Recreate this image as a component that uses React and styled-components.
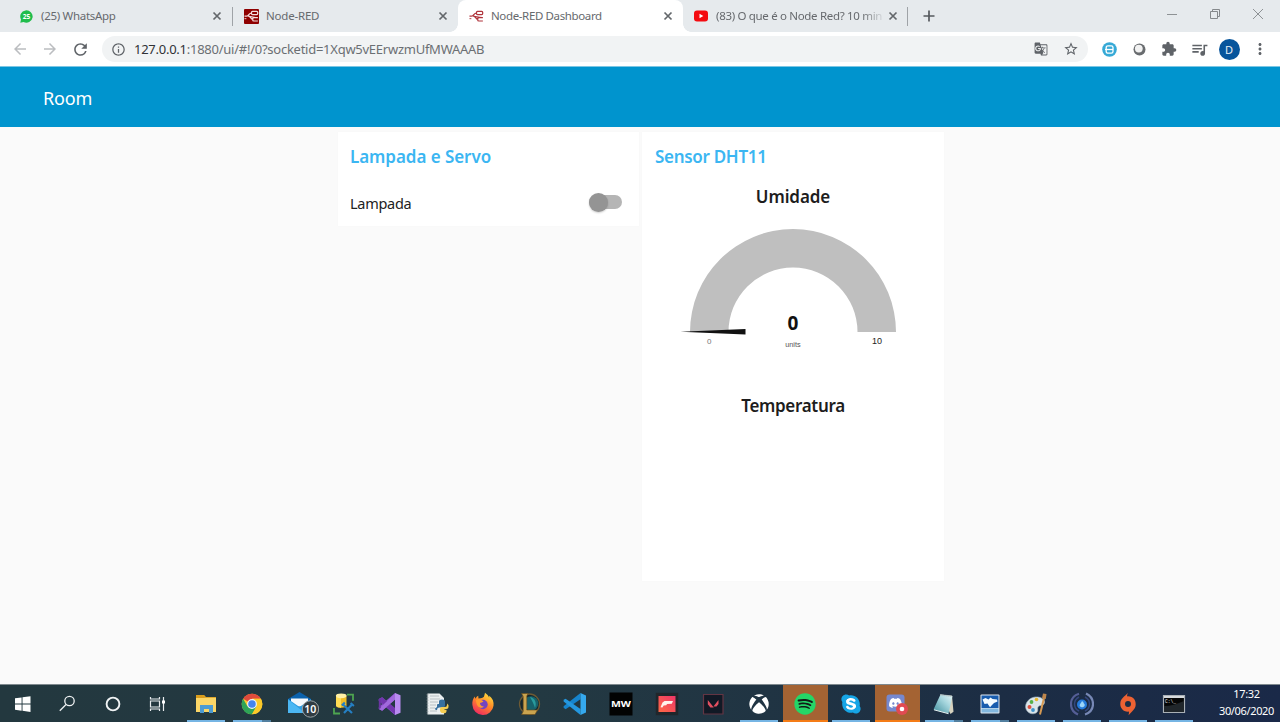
import React from "react";
import styled, { createGlobalStyle, css } from "styled-components";
import {
  MdArrowBack,
  MdArrowForward,
  MdRefresh,
  MdInfoOutline,
  MdGTranslate,
  MdStarBorder,
  MdExtension,
  MdQueueMusic,
  MdMoreVert,
} from "react-icons/md";
import { FaXbox, FaSpotify, FaSkype, FaDiscord } from "react-icons/fa";

const Global = createGlobalStyle`
  * { box-sizing: border-box; }
  html, body { margin: 0; padding: 0; overflow: hidden; }
  svg { display: block; flex: none; }
`;

const Screen = styled.div`
  width: 1280px;
  height: 722px;
  display: flex;
  flex-direction: column;
  overflow: hidden;
  background: #fafafa;
  font-family: "Noto Sans", "Open Sans", sans-serif;
`;

/* ---------- browser chrome ---------- */
const TabStrip = styled.div`
  height: 32px;
  display: flex;
  background: #e6eaed;
  flex: none;
`;
const TabItem = styled.div`
  position: relative;
  width: ${(p) => p.$w}px;
  height: 32px;
  display: flex;
  align-items: center;
  padding: 0 9px 0 ${(p) => p.$pad}px;
  color: #66696d;
  font-size: 11.5px;
  ${(p) =>
    p.$active &&
    css`
      background: #fff;
      border-radius: 8px 8px 0 0;
      &::before,
      &::after {
        content: "";
        position: absolute;
        bottom: 0;
        width: 8px;
        height: 8px;
      }
      &::before {
        left: -8px;
        background: radial-gradient(circle at 0 0, transparent 7.5px, #fff 8px);
      }
      &::after {
        right: -8px;
        background: radial-gradient(circle at 100% 0, transparent 7.5px, #fff 8px);
      }
    `}
`;
const TabLabel = styled.span`
  margin-left: ${(p) => p.$gap}px;
  letter-spacing: ${(p) => p.$ls}px;
  white-space: nowrap;
  flex: 1;
  line-height: 18px;
  ${(p) =>
    p.$fade &&
    css`
      mask-image: linear-gradient(90deg, #000 calc(100% - 20px), rgba(0, 0, 0, 0.15));
    `}
`;
const CloseMark = () => (
  <svg width="12" height="12" viewBox="0 0 12 12">
    <path d="M2.5 2.5l7 7M9.5 2.5l-7 7" stroke="#63676b" strokeWidth="1.7" />
  </svg>
);
const TabDivider = styled.div`
  width: 1px;
  height: 19px;
  margin-top: 7px;
  background: #9fa3a7;
`;
const NewTab = styled.div`
  width: 42px;
  display: flex;
  align-items: center;
  justify-content: center;
`;
const WindowButtons = styled.div`
  margin-left: auto;
  display: flex;
  width: 130px;
  padding-right: 1px;
  height: 27px;
  svg {
    margin: auto;
  }
`;
const Toolbar = styled.div`
  height: 34px;
  flex: none;
  display: flex;
  align-items: center;
  background: #fff;
  padding: 0 0 0 5px;
  color: #5f6368;
`;
const NavButton = styled.div`
  width: 30px;
  display: flex;
  justify-content: center;
  color: ${(p) => (p.$dim ? "#bbbdc0" : "#5f6368")};
`;
const AddressBar = styled.div`
  margin-left: 7px;
  width: 986px;
  height: 26px;
  border-radius: 13px;
  background: #f1f3f4;
  display: flex;
  align-items: center;
  padding: 0 9px;
`;
const Url = styled.span`
  margin-left: 8px;
  flex: 1;
  font-size: 13px;
  line-height: 20px;
  letter-spacing: -0.255px;
  color: #6b6f73;
  b {
    font-weight: 400;
    color: #303236;
  }
`;
const Spacer = styled.div`
  width: ${(p) => p.$w}px;
  flex: none;
`;
const Extensions = styled.div`
  display: flex;
  margin-left: 6px;
`;
const ToolSlot = styled.div`
  width: ${(p) => p.$w || 30}px;
  height: 26px;
  display: flex;
  align-items: center;
  justify-content: center;
`;
const Avatar = styled.div`
  width: 21px;
  height: 21px;
  border-radius: 50%;
  background: #07559c;
  color: #e6eef6;
  font-size: 11px;
  line-height: 21px;
  text-align: center;
`;

/* ---------- dashboard ---------- */
const Header = styled.header`
  height: 61px;
  flex: none;
  background: #0094ce;
  border-top: 1px solid #7cc6e4;
  padding: 2px 0 0 43px;
  display: flex;
  align-items: center;
  color: #fff;
  font-size: 18px;
  letter-spacing: -0.15px;
`;
const Main = styled.main`
  flex: 1;
  display: flex;
  align-items: flex-start;
  gap: 3px;
  padding: 5px 0 0 338px;
`;
const Card = styled.section`
  width: ${(p) => p.$w}px;
  height: ${(p) => p.$h}px;
  background: #fff;
  box-shadow: 0 0 1px #f0f0f0;
  padding: 13px ${(p) => p.$px}px 0;
`;
const CardTitle = styled.h2`
  margin: 0;
  font-size: 17px;
  line-height: 24px;
  font-weight: 600;
  letter-spacing: ${(p) => p.$ls}px;
  color: #3bb6f2;
`;
const SwitchRow = styled.div`
  display: flex;
  align-items: center;
  justify-content: space-between;
  margin-top: 22px;
  padding-right: 5px;
  height: 24px;
  font-size: 14.5px;
  letter-spacing: -0.28px;
  color: #222;
`;
const Track = styled.div`
  width: 33px;
  height: 14px;
  border-radius: 7px;
  background: #b5b5b5;
  display: flex;
  align-items: center;
  margin-bottom: 2px;
`;
const Thumb = styled.div`
  width: 19px;
  height: 19px;
  flex: none;
  border-radius: 50%;
  background: #949494;
  box-shadow: 0 1px 2px rgba(0, 0, 0, 0.2);
`;
const GaugeTitle = styled.h3`
  margin: ${(p) => p.$mt}px 0 0;
  font-size: 17px;
  line-height: 24px;
  font-weight: 600;
  letter-spacing: ${(p) => p.$ls}px;
  text-align: center;
  color: #1d1d1d;
`;
const GaugeBox = styled.div`
  height: 140px;
  margin-top: 12px;
  display: flex;
  justify-content: center;
`;

/* ---------- taskbar ---------- */
const Taskbar = styled.footer`
  height: 38px;
  flex: none;
  display: flex;
  border-top: 1px solid #7f898e;
  background: linear-gradient(90deg, #23383f 0%, #233942 42%, #203443 60%, #1c2d44 78%, #1a2948 100%);
`;
const SystemCell = styled.div`
  width: 45px;
  height: 37px;
  display: flex;
  align-items: center;
  justify-content: center;
`;
const AppCell = styled.div`
  width: 46.1px;
  height: 37px;
  position: relative;
  display: flex;
  align-items: center;
  justify-content: center;
  ${(p) =>
    p.$alert &&
    css`
      background: linear-gradient(#a46333, #a46333) center / 45px 100% no-repeat;
    `}
  &::after {
    content: "";
    position: absolute;
    bottom: 0;
    left: ${(p) => (p.$alert ? 0.5 : 4)}px;
    width: ${(p) => (p.$alert ? 45 : 38)}px;
    height: 2px;
    background: ${(p) =>
      p.$alert
        ? "#f57c16"
        : p.$multi
        ? "linear-gradient(90deg,#76b5e4 29px,#527f9f 29px)"
        : p.$open
        ? "#76b5e4"
        : "transparent"};
  }
`;
const Clock = styled.div`
  margin-left: auto;
  width: 66px;
  padding: 0 1px 0 0;
  text-align: center;
  color: #fff;
  font-size: 11px;
  line-height: 17px;
  letter-spacing: -0.35px;
  white-space: nowrap;
`;
const SkypeDisc = styled.div`
  display: flex;
  background: radial-gradient(circle, #fff 6px, transparent 7px);
`;
const SpotifyDisc = styled.div`
  display: flex;
  border-radius: 50%;
  background: radial-gradient(circle, #101c17 9px, transparent 10px);
`;

const FlowMark = ({ size, color, bg }) => (
  <svg width={size} height={size} viewBox="0 0 16 16">
    {bg && <rect width="16" height="16" rx="1" fill={bg} />}
    <g fill="none" stroke={color} strokeWidth="1.3">
      <rect x="8" y="2.600" width="6.600" height="3.300" rx="1" />
      <path d="M8 4.300C5 4.300 5.300 7.500 2.600 7.500H.5M3.500 7.300C7.500 6.600 6.500 11 9.500 11.200M14.800 9.300H10.500q-1.200 0-1.200 1v1.500q0 1 1.200 1h4.300M6 7.800c2 .2 4 1.400 8 1.400" />
    </g>
    <path d="M.5 10.300h2" stroke={color} />
  </svg>
);

const Svg = ({ s = 24, children }) => (
  <svg width={s} height={s} viewBox="0 0 24 24">
    {children}
  </svg>
);

const Explorer = () => (
  <Svg>
    <path d="M2 3h8l2 2h10v15H2z" fill="#e1a82c" />
    <path d="M2 6h20v14H2z" fill="#fbd667" />
    <path d="M2 3h8l1 2-1 1H2z" fill="#d99d1c" />
    <path d="M6 21v-8h13v8h-4v-4h-5v4z" fill="#4c9bd3" />
  </Svg>
);
const Chrome = () => (
  <Svg>
    <circle cx="12" cy="12" r="10.3" fill="#fbc929" />
    <path d="M12 12L3.1 6.8A10.3 10.3 0 0 1 20.9 6.8H12z" fill="#df4a3c" />
    <path d="M3.1 6.8A10.3 10.3 0 0 0 12 22.3l4.400-7.700L12 12 7.500 14.500z" fill="#2ea457" />
    <path d="M12 6.800h8.900A10.300 10.300 0 0 1 12 22.300l4.500-7.700z" fill="#fbc929" />
    <circle cx="12" cy="12" r="4.900" fill="#eef4fb" />
    <circle cx="12" cy="12" r="3.800" fill="#4484ee" />
  </Svg>
);
const MailSlot = styled.div`
  margin-left: 6px;
`;
const Mail = () => (
  <MailSlot>
    <svg width="36" height="28" viewBox="0 0 36 28">
      <path d="M5 9L16.500 2 28 9v14H5z" fill="#0b62ad" />
      <path d="M8 8.500h17v8H8z" fill="#f5f8fb" />
      <path d="M5 9l11.500 8L28 9v14H5z" fill="#2b9de2" />
      <path d="M5 9.500L22 23H5z" fill="#4cb7f3" />
      <circle cx="27.500" cy="19" r="8.200" fill="#303c42" stroke="#9ba3a6" />
      <text x="27.300" y="23" textAnchor="middle" fontSize="10.500" fontWeight="600" fontFamily="Noto Sans, sans-serif" fill="#fff">10</text>
    </svg>
  </MailSlot>
);
const Database = () => (
  <Svg>
    <path d="M15 2.700h6v6M2 16v5.500h6" stroke="#4ea550" strokeWidth="1.800" fill="none" />
    <path d="M4 3.500v10c0 3 10.500 3 10.500 0v-10z" fill="#f0bd27" />
    <path d="M4 5v8.500c0 1.500 3 2.200 5 2.200V5z" fill="#ffdc54" />
    <ellipse cx="9.200" cy="3.800" rx="5.300" ry="2.400" fill="#fff0a5" />
    <path d="M11 12.500l9 8.500M20.500 12L12 21" stroke="#257fc3" strokeWidth="2.200" />
    <path d="M9.800 13.500l3-3M18.600 11l3.300 3" stroke="#257fc3" strokeWidth="2" />
  </Svg>
);
const VisualStudio = () => (
  <Svg>
    <path d="M17 1v6.200L4.200 18.800.8 17V7l3.400-1.800L17 16.800V23L.8 9v6z" fill="#8d50cf" />
    <path d="M.8 7l3.400-1.800L18 16.800V23L.8 9z" fill="#7236ad" />
    <path d="M17.500 1v6.200L4.200 18.800.8 17z" fill="#a169dc" />
    <path d="M.8 7v10l2-1V8z" fill="#6b35a2" />
    <path d="M17 1l5.500 2.300v17.400L17 23z" fill="#b98bf0" />
  </Svg>
);
const PythonFile = () => (
  <Svg>
    <path d="M2.500 1.500h12L19 6v16.500H2.500z" fill="#ebeff0" />
    <path d="M5 4h9M5 7h10M5 10h8M5 13h6M5 16h5M5 19h7" stroke="#b8c0c3" />
    <path d="M2.500 2v20" stroke="#8c9699" strokeWidth="1.500" strokeDasharray="1.400 1.400" />
    <path d="M12 15v-2q0-1 1-1h1V9.500q0-2 3-2t3 2v4q0 2-2 2h-4q-2 0-2 2.500h-.500q-1.500 0-1.500-1.500z" fill="#36709f" />
    <path d="M22.500 11.500q1.500 1.500 1 3.500 0 2-2 2h-2v.700h2V19q0 2.300-3 2.300t-3.500-2.300v-2q0-2 2-2h3q2 0 2-2z" fill="#f5ce52" />
  </Svg>
);
const Firefox = () => (
  <Svg>
    <defs>
      <linearGradient id="ff" x1=".8" y1="0" x2=".25" y2="1">
        <stop offset="0" stopColor="#ffe642" />
        <stop offset=".45" stopColor="#ff8a26" />
        <stop offset="1" stopColor="#ef2465" />
      </linearGradient>
    </defs>
    <path d="M14 .8c2 1.500 3.600 3 4.100 5l.2-2c3.500 2.700 4.700 6 4.200 10A10.600 10.600 0 0 1 1.400 13C1 9.500 2 6.500 3.800 4.400l.6 2.400c.9-1.800 1.800-2.500 2.800-3.100l.3 2.700c3.300 0 4-.4 5.400-1.600.6-1.200.7-2.500 1.100-4z" fill="url(#ff)" />
    <circle cx="12" cy="12.500" r="4.700" fill="#7444bf" />
    <path d="M5 8c3-2 6 0 7.500 1.500-1 1-2.500 1-3.500 1.500 0 2 1.500 3.700 4 3.600-3 3-8 .4-8-6.600z" fill="#ff9a2d" />
  </Svg>
);
const League = () => (
  <Svg>
    <circle cx="12.500" cy="12" r="10" fill="#14262c" stroke="#6d5a34" strokeWidth="1.300" />
    <circle cx="14" cy="11.500" r="7.300" fill="#17616b" />
    <path d="M13 5c5 1 7 6 5 11-1-4-3-7-5-11z" fill="#299b9d" />
    <path d="M4.500 1.500h6.500L9.800 4v14h10.700L18 22.500H4.500l1.700-3V4.300z" fill="#caa44f" stroke="#664919" strokeWidth=".6" />
  </Svg>
);
const VsCode = () => (
  <Svg>
    <path d="M17.500 1v6.300L2.600 17.300.6 15.800v-1.600z" fill="#1684cd" />
    <path d="M17.500 23L.6 9.400V7.700L2.600 6.700 17.500 16.900z" fill="#2497df" />
    <path d="M17.500 1L23 3.500v17L17.500 23z" fill="#35a9ee" />
  </Svg>
);
const Warfare = () => (
  <Svg>
    <path d="M.5.500h23v23H.500z" fill="#020303" />
    <text x="12" y="15" textAnchor="middle" fontSize="8" fontWeight="700" textLength="20" lengthAdjust="spacingAndGlyphs" fontFamily="Noto Sans, sans-serif" fill="#fff">MW</text>
  </Svg>
);
const FGame = () => (
  <Svg>
    <defs>
      <linearGradient id="fg" x1="0" y1="1" x2="1" y2="0">
        <stop offset="0" stopColor="#ff6845" />
        <stop offset="1" stopColor="#ee3668" />
      </linearGradient>
    </defs>
    <path d="M.8.800h22.400v22.400H.8z" fill="#21262b" />
    <path d="M3.500 4h17v16h-17z" fill="url(#fg)" />
    <path d="M9.500 9H18l-1.200 2.700-4.700.3-.9 1.300-2.500.2-1.300 2-1.900-.2 2-4.800z" fill="#fff1eb" />
  </Svg>
);
const Valorant = () => (
  <Svg>
    <path d="M2.500 2.500h19.500v19.500H2.500z" fill="#111925" stroke="#633543" strokeWidth="1.200" />
    <path d="M6.800 8l6 7.500H9.400L6.800 12.200zM17.500 8v4l-2 2.600h-3.100z" fill="#e35061" />
  </Svg>
);
const DiscordMark = () => (
  <Svg>
    <rect x="1.500" y="2.500" width="18" height="17" rx="3" fill="#7688ce" />
    <FaDiscord x="3.500" y="4" width="14" height="14" size={14} color="#fff" />
    <circle cx="17" cy="17" r="6" fill="#e14a52" />
    <circle cx="17" cy="17" r="2.300" fill="#fff" />
  </Svg>
);
const Notepad = () => (
  <Svg>
    <defs>
      <linearGradient id="np" x1="0" y1="1" x2="1" y2="0">
        <stop offset="0" stopColor="#3c8c9b" />
        <stop offset=".6" stopColor="#a5d5dd" />
        <stop offset="1" stopColor="#e8f6f7" />
      </linearGradient>
    </defs>
    <path d="M8 2.500l12 1.200 1.500 16-3 2.200z" fill="#d6d2bf" />
    <path d="M8.500 2.500L20.500 4 16.500 21.500l-15-4z" fill="url(#np)" />
    <path d="M8.500 2.800L20 4.200" stroke="#a9b3b5" strokeWidth="1.500" strokeDasharray="1 1" />
    <path d="M2 17.800l14.500 3.900" stroke="#eaf6f6" />
  </Svg>
);
const Photo = () => (
  <Svg>
    <rect x="2.500" y="2.500" width="19" height="19" rx="1" fill="#dfe8ef" />
    <path d="M3.500 3.500h17V16h-17z" fill="#185cae" />
    <path d="M4.500 7.500l3-1.500 3 1.500 2-2 2 1.500 4.500.5.500 2-3.500 1.500-2 2-2 2.200-1.500-2.200-1-1.500-3 .5z" fill="#f4fbff" />
    <path d="M3.500 16.500h17v4h-17z" fill="#83b8df" />
  </Svg>
);
const Paint = () => (
  <Svg>
    <path d="M2 17c-2-6 4-13 12-12 7 1 8 6 5 8-2 1-4 0-5 2-1 2 1 4-2 6-4 2-8.500 0-10-4z" fill="#dbe5ea" stroke="#a3b5bf" strokeWidth=".6" />
    <circle cx="5.500" cy="15" r="2" fill="#db5240" />
    <circle cx="7.500" cy="10" r="1.900" fill="#56af4a" />
    <circle cx="12.500" cy="7.500" r="1.800" fill="#e7b62f" />
    <circle cx="9" cy="18" r="1.900" fill="#4294cc" />
    <path d="M20 6l-4 16.500" stroke="#d59953" strokeWidth="2" />
    <path d="M18 6l1-4.500L22.500 2l-.7 5z" fill="#be864c" />
  </Svg>
);
const Orbit = () => (
  <Svg>
    <g fill="none" strokeWidth="2.200">
      <path d="M9 1.800C-1.500 5-1.500 18 8 22.500" stroke="#555e96" />
      <path d="M15 22.500C25.500 19 25.500 6 16 1.500" stroke="#7788b5" />
      <path d="M9 5C3 8 3 16 9 19M15 5c6 3 6 11 0 14" stroke="#35477d" strokeWidth="1.500" />
    </g>
    <circle cx="12" cy="12.500" r="5" fill="#267bdc" />
    <path d="M12 9c1.700 1 1.500 2 2.500 3.300s-.8 3-2.500 3-3-1.500-2-3 1.500-2 2-3.300z" fill="#9bd5fa" />
  </Svg>
);
const Origin = () => (
  <Svg>
    <path d="M12 1c-.8 1.300-1 2.300-.8 3.400C17 4 20 8 19.700 12.700 19.500 17.500 15 20 12.500 23.300c.5-1.600.6-2.800.3-3.700C7 20 4 16 4.300 11.300 4.500 6.500 9 4 12 1z" fill="#ed6233" />
    <circle cx="12" cy="12" r="3" fill="#1c2d44" />
  </Svg>
);
const Terminal = () => (
  <Svg>
    <path d="M1.500 3.500h21v17h-21z" fill="#050607" stroke="#a9b0b6" strokeWidth="1.200" />
    <path d="M2 4h20v2H2z" fill="#d6dade" />
    <path d="M2 14c7 0 13-2 20-5v11H2z" fill="#20262b" />
    <text x="3" y="10.800" fontSize="4.600" fontFamily="Liberation Mono, monospace" fill="#e7eaec">C:\_</text>
  </Svg>
);

const apps = [
  { icon: <Explorer />, open: true },
  { icon: <Chrome />, multi: true },
  { icon: <Mail /> },
  { icon: <Database /> },
  { icon: <VisualStudio /> },
  { icon: <PythonFile /> },
  { icon: <Firefox /> },
  { icon: <League /> },
  { icon: <VsCode /> },
  { icon: <Warfare /> },
  { icon: <FGame /> },
  { icon: <Valorant /> },
  { icon: <FaXbox size={20} color="#fff" />, open: true },
  { icon: <SpotifyDisc><FaSpotify size={22} color="#25d667" /></SpotifyDisc>, alert: true },
  { icon: <SkypeDisc><FaSkype size={22} color="#16a5e6" /></SkypeDisc>, open: true },
  { icon: <DiscordMark />, alert: true },
  { icon: <Notepad />, multi: true },
  { icon: <Photo />, multi: true },
  { icon: <Paint />, open: true },
  { icon: <Orbit />, open: true },
  { icon: <Origin />, open: true },
  { icon: <Terminal />, open: true },
];

const Gauge = () => (
  <svg width="240" height="140" viewBox="673.500 221 240 140">
    <path d="M690.500 332a103 103 0 0 1 206 0h-38.500a64.500 64.500 0 0 0-129 0z" fill="#bfbfbf" />
    <path d="M681 331.700L746 329v5.500z" fill="#111" />
    <g fontFamily="Liberation Sans, Arial, sans-serif" textAnchor="middle">
      <text x="709.800" y="344" fontSize="8" fill="#777">0</text>
      <text x="877.500" y="344" fontSize="9" fill="#222">10</text>
      <text x="793.400" y="347" fontSize="7.300" fill="#555">units</text>
    </g>
    <text x="793.500" y="330" fontSize="19" fontWeight="700" textAnchor="middle" fontFamily="Noto Sans, sans-serif" fill="#111">0</text>
  </svg>
);

export default function App() {
  return (
    <Screen>
      <Global />
      <TabStrip>
        <TabItem $w={232} $pad={20}>
          <svg width="13" height="13" viewBox="0 0 13 13">
            <path d="M.3 12.700L1 9.500A6.200 6.200 0 1 1 3.500 12z" fill="#20bd4c" />
            <text x="6.600" y="9" textAnchor="middle" fontSize="6.600" fontWeight="700" fontFamily="Noto Sans, sans-serif" fill="#fff">25</text>
          </svg>
          <TabLabel $gap={8} $ls={-0.3}>(25) WhatsApp</TabLabel>
          <CloseMark />
        </TabItem>
        <TabDivider />
        <TabItem $w={225} $pad={11}>
          <FlowMark size={15} color="#f4dede" bg="#8f0000" />
          <TabLabel $gap={7} $ls={-0.2}>Node-RED</TabLabel>
          <CloseMark />
        </TabItem>
        <TabItem $w={225} $pad={11} $active>
          <FlowMark size={15} color="#b0343c" />
          <TabLabel $gap={7} $ls={-0.37}>Node-RED Dashboard</TabLabel>
          <CloseMark />
        </TabItem>
        <TabItem $w={224} $pad={11}>
          <svg width="14" height="12" viewBox="0 0 14 12">
            <rect y=".5" width="14" height="11" rx="3" fill="#f40b10" />
            <path d="M5.500 3.700v4.600L9.300 6z" fill="#fff" />
          </svg>
          <TabLabel $gap={8} $ls={-0.32} $fade>(83) O que é o Node Red? 10 min</TabLabel>
          <Spacer $w={5} />
          <CloseMark />
        </TabItem>
        <TabDivider />
        <NewTab>
          <svg width="12" height="12" viewBox="0 0 12 12">
            <path d="M6 .5v11M.5 6h11" stroke="#55595d" strokeWidth="1.700" />
          </svg>
        </NewTab>
        <WindowButtons>
          <svg width="12" height="12" viewBox="0 0 12 12"><path d="M1 6.500h10" stroke="#8e9295" /></svg>
          <svg width="12" height="12" viewBox="0 0 12 12" fill="none" stroke="#85898c">
            <path d="M1.500 3.500h7v7h-7zM3.500 3.500v-2h7v7h-2" />
          </svg>
          <svg width="12" height="12" viewBox="0 0 12 12"><path d="M1 1l10 10M11 1L1 11" stroke="#8e9295" /></svg>
        </WindowButtons>
      </TabStrip>

      <Toolbar>
        <NavButton $dim><MdArrowBack size={18} /></NavButton>
        <NavButton $dim><MdArrowForward size={18} /></NavButton>
        <NavButton><MdRefresh size={19} /></NavButton>
        <AddressBar>
          <MdInfoOutline size={15} />
          <Url><b>127.0.0.1</b>:1880/ui/#!/0?socketid=1Xqw5vEErwzmUfMWAAAB</Url>
          <MdGTranslate size={14} />
          <Spacer $w={15} />
          <MdStarBorder size={16} />
        </AddressBar>
        <Extensions>
          <ToolSlot>
            <svg width="15" height="15" viewBox="0 0 15 15">
              <circle cx="7.500" cy="7.500" r="7.300" fill="#36a9d6" />
              <rect x="4.200" y="3.800" width="6.800" height="7.400" rx="1.700" fill="none" stroke="#fff" strokeWidth="1.300" />
              <path d="M3 7.500h8" stroke="#fff" strokeWidth="1.300" />
            </svg>
          </ToolSlot>
          <ToolSlot>
            <svg width="13" height="13" viewBox="0 0 13 13">
              <circle cx="6.500" cy="6.500" r="6" fill="#696c6f" />
              <circle cx="5.800" cy="5.600" r="3.900" fill="#f2f2f2" />
            </svg>
          </ToolSlot>
          <ToolSlot><MdExtension size={16} /></ToolSlot>
          <ToolSlot><MdQueueMusic size={19} /></ToolSlot>
          <ToolSlot><Avatar>D</Avatar></ToolSlot>
          <ToolSlot $w={32}><MdMoreVert size={18} /></ToolSlot>
        </Extensions>
      </Toolbar>

      <Header>Room</Header>
      <Main>
        <Card $w={301} $h={94} $px={12}>
          <CardTitle $ls={-0.06}>Lampada e Servo</CardTitle>
          <SwitchRow>
            Lampada
            <Track><Thumb /></Track>
          </SwitchRow>
        </Card>
        <Card $w={302} $h={449} $px={13}>
          <CardTitle $ls={-0.3}>Sensor DHT11</CardTitle>
          <GaugeTitle $mt={16} $ls={-0.1}>Umidade</GaugeTitle>
          <GaugeBox><Gauge /></GaugeBox>
          <GaugeTitle $mt={33} $ls={-0.32}>Temperatura</GaugeTitle>
        </Card>
      </Main>

      <Taskbar>
        <SystemCell>
          <svg width="16" height="16" viewBox="0 0 16 16">
            <path d="M0 2.300L6.600 1.400v6.200H0zM7.500 1.300L15.500.2v7.400h-8zM0 8.500h6.600v6.200L0 13.800zM7.500 8.500h8v7.400l-8-1.100z" fill="#fff" />
          </svg>
        </SystemCell>
        <SystemCell>
          <svg width="17" height="17" viewBox="0 0 17 17" fill="none" stroke="#eef1f2" strokeWidth="1.300">
            <circle cx="10.500" cy="6" r="4.700" /><path d="M7 9.500L.8 15.800" />
          </svg>
        </SystemCell>
        <SystemCell>
          <svg width="16" height="16" viewBox="0 0 16 16"><circle cx="8" cy="8" r="6.400" fill="none" stroke="#f0f3f4" strokeWidth="1.900" /></svg>
        </SystemCell>
        <SystemCell>
          <svg width="17" height="16" viewBox="0 0 17 16" fill="none" stroke="#e8ecee" strokeWidth="1.200">
            <path d="M1.500 1v2h9V1M1.500 15v-2h9v2M1.500 5h9v6h-9zM14.500 1v14" /><path d="M13 4.500h3v3h-3z" fill="#fff" stroke="none" />
          </svg>
        </SystemCell>
        <Spacer $w={3} />
        {apps.map((a, i) => (
          <AppCell key={i} $open={a.open} $multi={a.multi} $alert={a.alert}>
            {a.icon}
          </AppCell>
        ))}
        <Clock>17:32<br />30/06/2020</Clock>
      </Taskbar>
    </Screen>
  );
}
